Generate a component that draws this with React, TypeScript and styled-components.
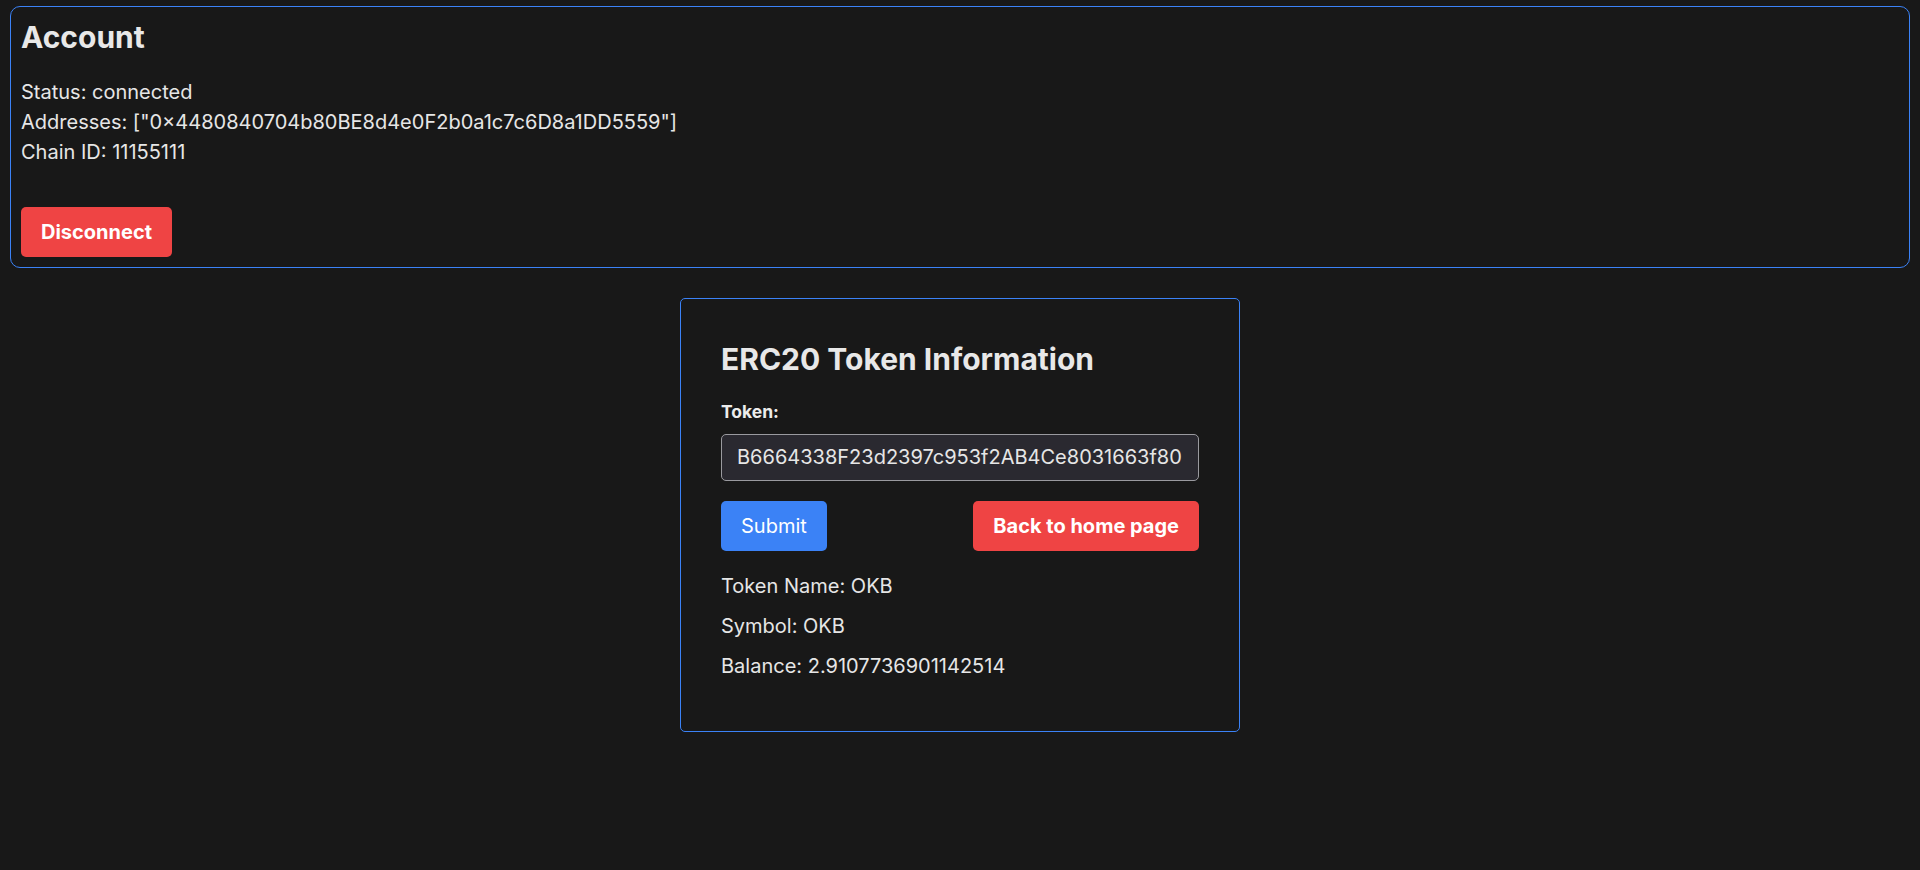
import React from "react";
import styled, { createGlobalStyle } from "styled-components";

const GlobalStyle = createGlobalStyle`
  html, body {
    margin: 0;
    padding: 0;
    background-color: #181818;
  }
  body {
    font-family: Inter, "Noto Sans", sans-serif;
    color: #e6e6e6;
    font-size: 20px;
    line-height: 30px;
  }
  * {
    box-sizing: border-box;
  }
`;

const Page = styled.div`
  min-height: 870px;
  padding: 6px 10px;
  display: flex;
  flex-direction: column;
  gap: 30px;
`;

const AccountBox = styled.section`
  border: 1px solid #3b82f6;
  border-radius: 10px;
  padding: 10px;
`;

const Heading = styled.h2<{ $gap: number }>`
  margin: 0 0 ${(props) => props.$gap}px;
  font-size: 30px;
  line-height: 40px;
  font-weight: 700;
  color: #e8e8e8;
`;

const InfoLines = styled.div`
  margin-bottom: 40px;
`;

const Button = styled.button<{ $tone: "red" | "blue"; $bold?: boolean }>`
  border: none;
  border-radius: 5px;
  padding: 10px 20px;
  font-family: Inter, "Noto Sans", sans-serif;
  font-size: 20px;
  line-height: 30px;
  font-weight: ${(props) => (props.$bold ? 700 : 400)};
  color: #ffffff;
  background-color: ${(props) =>
    props.$tone === "red" ? "#ef4444" : "#3b82f6"};
  cursor: pointer;
`;

const Card = styled.section`
  align-self: center;
  width: 560px;
  border: 1px solid #3b82f6;
  border-radius: 5px;
  padding: 40px;
`;

const Label = styled.label`
  display: block;
  margin-bottom: 10px;
  font-size: 17.5px;
  line-height: 25px;
  font-weight: 700;
  color: #ececec;
`;

const TokenInput = styled.input`
  display: block;
  width: 100%;
  margin-bottom: 20px;
  padding: 10px 15px;
  border: 1px solid #9a9a9f;
  border-radius: 5px;
  background-color: #2a2930;
  color: #e6e6e6;
  font-family: Inter, "Noto Sans", sans-serif;
  font-size: 20px;
  line-height: 25px;
  outline: none;
`;

const ButtonRow = styled.div`
  display: flex;
  justify-content: space-between;
  margin-bottom: 20px;
`;

const InfoLine = styled.p`
  margin: 0 0 10px;
`;

export default function App() {
  return (
    <>
      <GlobalStyle />
      <Page>
        <AccountBox>
          <Heading $gap={20}>Account</Heading>
          <InfoLines>
            <div>Status: connected</div>
            <div>Addresses: ["0×4480840704b80BE8d4e0F2b0a1c7c6D8a1DD5559"]</div>
            <div>Chain ID: 11155111</div>
          </InfoLines>
          <Button $tone="red" $bold>
            Disconnect
          </Button>
        </AccountBox>

        <Card>
          <Heading $gap={20}>ERC20 Token Information</Heading>
          <Label htmlFor="token">Token:</Label>
          <TokenInput
            id="token"
            defaultValue="B6664338F23d2397c953f2AB4Ce8031663f80"
          />
          <ButtonRow>
            <Button $tone="blue">Submit</Button>
            <Button $tone="red" $bold>
              Back to home page
            </Button>
          </ButtonRow>
          <InfoLine>Token Name: OKB</InfoLine>
          <InfoLine>Symbol: OKB</InfoLine>
          <InfoLine>Balance: 2.9107736901142514</InfoLine>
        </Card>
      </Page>
    </>
  );
}
